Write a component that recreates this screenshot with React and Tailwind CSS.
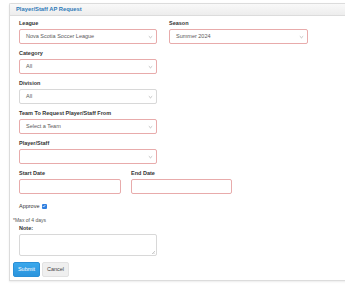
import React from 'react';

// --- SUB-COMPONENTS ----------------------------------------------------------
function Chevron() {
  return (
    <svg width="5" height="4" viewBox="0 0 5 4" className="shrink-0">
      <path d="M0.8 1.2 L2.5 2.8 L4.2 1.2" fill="none" stroke="#999" strokeWidth="0.6" />
    </svg>
  );
}

function FieldLabel({ text }) {
  return (
    <div className="h-[8px] mb-[2px] text-[5.5px] leading-[8px] font-bold text-[#333]">
      {text}
    </div>
  );
}

function FakeSelect({ value, width = 'w-[138px]', invalid = true }) {
  return (
    <div
      className={`${width} h-[15px] flex items-center justify-between rounded-[2px] border bg-white pl-[6px] pr-[3px] ${
        invalid ? 'border-[#e8abab]' : 'border-[#d8d8d8]'
      }`}
    >
      <span className="text-[5.5px] text-[#5a5a5a]">{value}</span>
      <Chevron />
    </div>
  );
}

function Field({ label, children, className = '' }) {
  return (
    <div className={`mb-[5px] ${className}`}>
      <FieldLabel text={label} />
      {children}
    </div>
  );
}

// --- MAIN COMPONENT ----------------------------------------------------------
export default function App() {
  return (
    <div
      className="w-[345px] h-[308px] overflow-hidden bg-white"
      style={{ fontFamily: '"Liberation Sans", Arial, sans-serif' }}
    >
      <div className="ml-[9px] mt-[3px] w-[345px] border border-r-0 border-[#dcdcdc] rounded-tl-[2px] shadow-[0_1px_2px_rgba(0,0,0,0.08)]">
        {/* ── Header ───────────────────────────────────────────────────── */}
        <div className="h-[12px] flex items-center pl-[6px] border-b border-[#dcdcdc] bg-gradient-to-b from-[#f9f9f9] to-[#ededed]">
          <span className="text-[5.8px] font-bold text-[#2f7ab8]">Player/Staff AP Request</span>
        </div>

        {/* ── Body ─────────────────────────────────────────────────────── */}
        <div className="pl-[3px] pt-[3px] pb-[3px]">
          <div className="pl-[6px]">
            <div className="flex gap-[12px]">
              <Field label="League">
                <FakeSelect value="Nova Scotia Soccer League" />
              </Field>
              <Field label="Season">
                <FakeSelect value="Summer 2024" width="w-[139px]" />
              </Field>
            </div>

            <Field label="Category">
              <FakeSelect value="All" />
            </Field>

            <Field label="Division">
              <FakeSelect value="All" invalid={false} />
            </Field>

            <Field label="Team To Request Player/Staff From">
              <FakeSelect value="Select a Team" />
            </Field>

            <Field label="Player/Staff">
              <FakeSelect value="" />
            </Field>

            <div className="flex gap-[10px]">
              <Field label="Start Date" className="mb-0">
                <div className="w-[102px] h-[15px] rounded-[2px] border border-[#e8abab] bg-white" />
              </Field>
              <Field label="End Date" className="mb-0">
                <div className="w-[101px] h-[15px] rounded-[2px] border border-[#e8abab] bg-white" />
              </Field>
            </div>

            <div className="mt-[2px] h-[10px] flex items-center gap-[2px]">
              <span className="text-[5.5px] text-[#333]">Approve</span>
              <span className="w-[5px] h-[5px] rounded-[1px] bg-[#2f7fe0] flex items-center justify-center">
                <svg width="4" height="4" viewBox="0 0 4 4">
                  <path d="M0.7 2 L1.7 3 L3.3 1" fill="none" stroke="#fff" strokeWidth="0.7" />
                </svg>
              </span>
            </div>
          </div>

          <div className="mt-[6px] h-[7px] text-[5px] leading-[7px] text-[#555]">*Max of 4 days</div>

          <div className="pl-[6px]">
            <FieldLabel text="Note:" />
            <div className="relative w-[138px] h-[22px] rounded-[2px] border border-[#d8d8d8] bg-white">
              <svg width="3" height="3" viewBox="0 0 3 3" className="absolute right-[1px] bottom-[1px]">
                <path d="M3 0 L0 3 M3 1.5 L1.5 3" stroke="#999" strokeWidth="0.5" />
              </svg>
            </div>
          </div>

          <div className="mt-[6px] flex gap-[2px]">
            <button className="w-[27px] h-[15px] rounded-[2px] bg-gradient-to-b from-[#3aa8ec] to-[#2b94dd] border border-[#2a8fd6] text-[5.5px] text-white">
              Submit
            </button>
            <button className="w-[27px] h-[15px] rounded-[2px] bg-[#efefef] border border-[#e2e2e2] text-[5.5px] text-[#444]">
              Cancel
            </button>
          </div>
        </div>
      </div>
    </div>
  );
}
